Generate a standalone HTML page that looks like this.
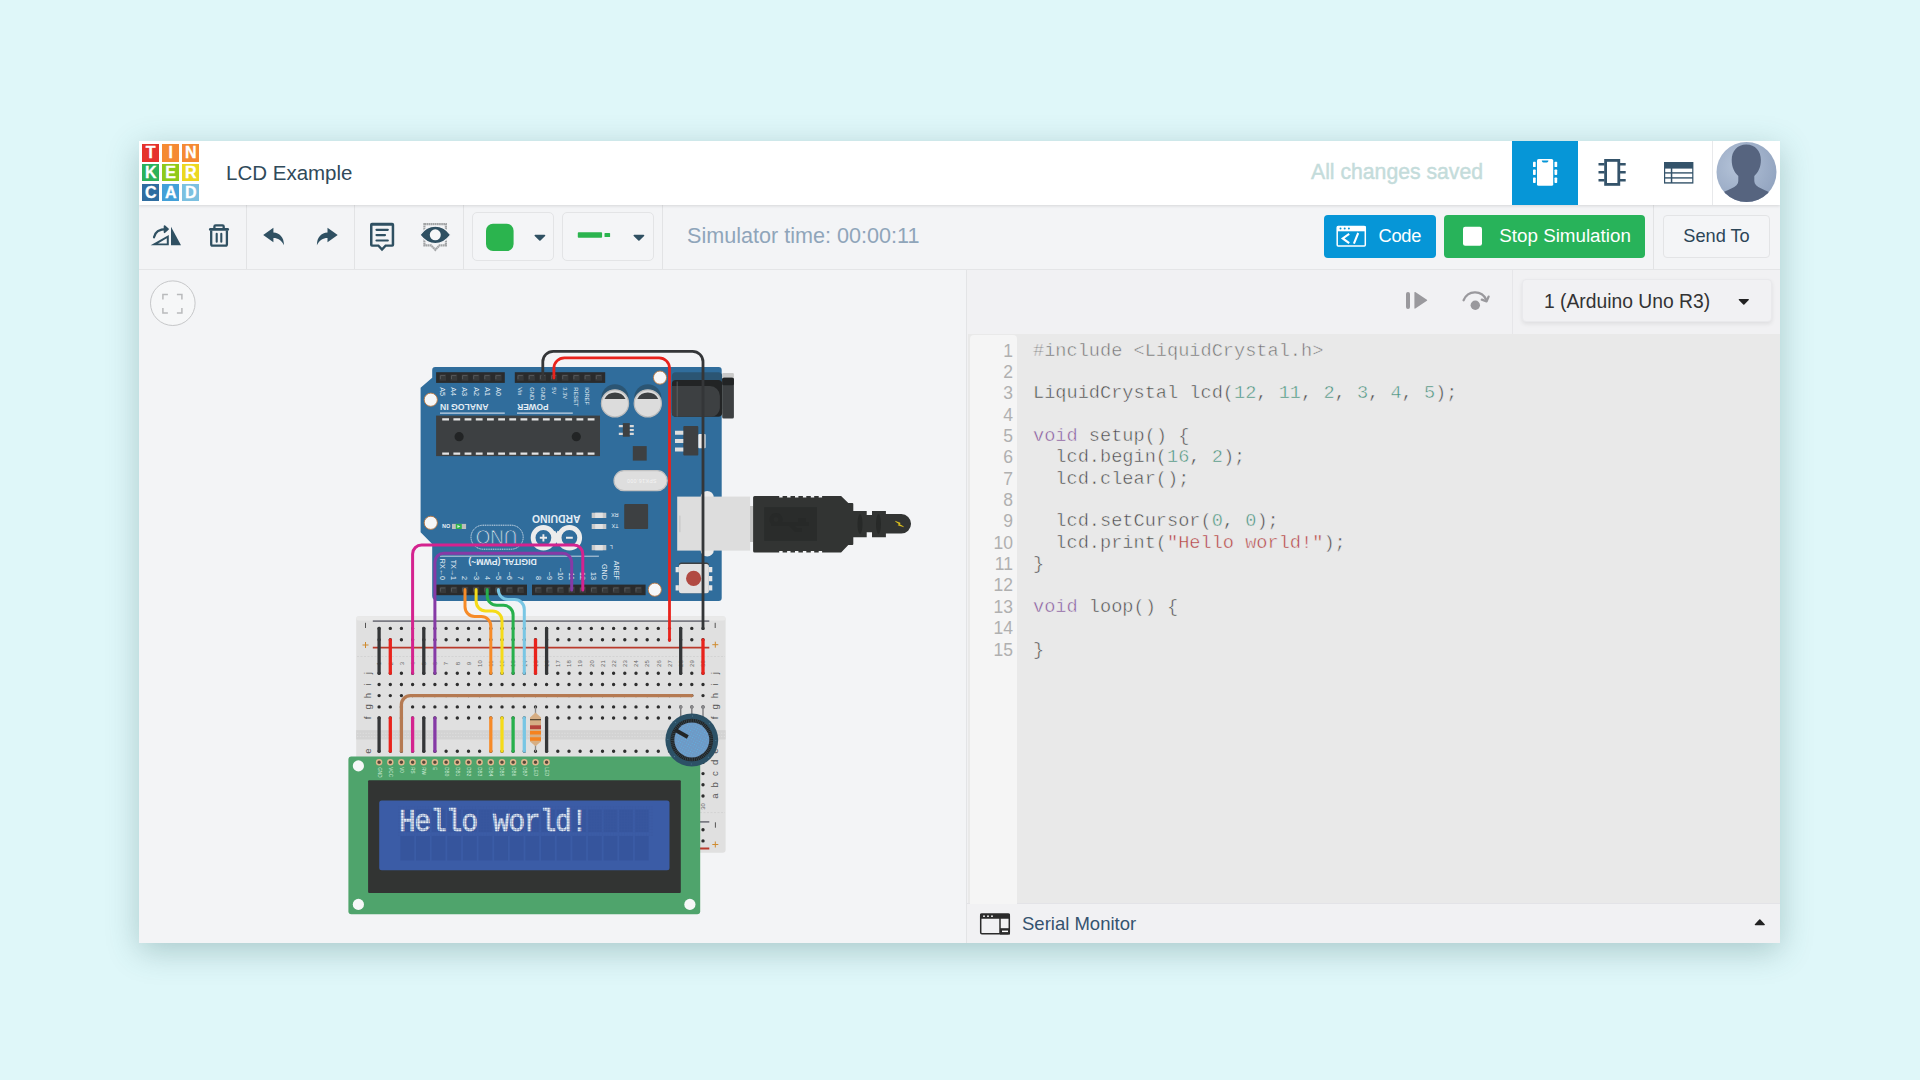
<!DOCTYPE html>
<html lang="en">
<head>
<meta charset="utf-8">
<title>LCD Example - Tinkercad</title>
<style>
*{box-sizing:border-box;margin:0;padding:0}
html,body{width:1920px;height:1080px;overflow:hidden}
body{background:#dff7f9;font-family:"Liberation Sans",sans-serif;position:relative}
.abs{position:absolute}
#win{position:absolute;left:139px;top:141px;width:1641px;height:802px;background:#f3f4f6;box-shadow:0 8px 30px rgba(45,95,95,.30);overflow:hidden}
#hdr{position:absolute;left:0;top:0;width:1641px;height:64px;background:#fff;box-shadow:0 1px 3px rgba(0,0,0,.12);z-index:3}
.tile{position:absolute;width:17.400px;height:17.400px;color:#fff;font-weight:bold;font-size:16px;line-height:17.800px;-webkit-text-stroke:.3px #fff;text-align:center}
#title{position:absolute;left:87px;top:19.700px;font-size:20.5px;color:#304a5a;line-height:24px;white-space:nowrap}
#saved{position:absolute;right:297px;top:19px;font-size:21.2px;color:#c4dcdb;-webkit-text-stroke:.45px #c4dcdb;line-height:24px;white-space:nowrap}
#tb{position:absolute;left:0;top:64px;width:1641px;height:65px;background:#f3f4f6;border-bottom:1px solid #e4e5e7;z-index:2}
.sep{position:absolute;top:0;width:1px;height:64px;background:#e2e3e5}
.box{position:absolute;top:7.400px;height:48.500px;border:1px solid #e3e4e6;border-radius:5px;background:#f4f5f7}
#simtime{position:absolute;left:548px;top:83.200px;font-size:21.6px;color:#8fa5ba;line-height:24px;white-space:nowrap;z-index:2}
.btn{position:absolute;top:74.200px;height:42.700px;border-radius:4px;color:#fff;font-size:17.5px;line-height:42px;white-space:nowrap;z-index:2}
#cp{position:absolute;left:827px;top:128px;width:814px;height:674px;background:#f1f1f3;border-left:1px solid #e3e4e6}
#gut{position:absolute;left:3px;top:66px;width:47px;height:569px;background:#f5f5f5;border-radius:4px 4px 0 0;z-index:1}
#code{position:absolute;left:1px;top:65px;width:813px;height:569px;background:#e9e9e9}
.ln{z-index:2;position:absolute;right:767px;width:40px;text-align:right;font-size:17.5px;color:#b0b0b0;line-height:21.36px;height:21.36px}
.cl{position:absolute;left:66px;font-family:"Liberation Mono",monospace;font-size:18.62px;line-height:21.36px;height:21.36px;color:#484848;white-space:pre;-webkit-text-stroke:.5px #e9e9e9}
.k{color:#84559a}.n{color:#46907a}.s{color:#b23c3c}.m{color:#737373}
#sertxt{position:absolute;left:55px;top:8px;font-size:18.5px;line-height:24px;color:#35536f;white-space:nowrap}
#dd{position:absolute;left:555px;top:10px;width:250px;height:43px;border-radius:4px;background:#f1f1f3;border:1px solid #e9e9ec;box-shadow:0 2px 4px rgba(0,0,0,.08)}
#dd span{position:absolute;left:21px;top:10px;font-size:19.300px;line-height:24px;color:#333;white-space:nowrap}
#ser{position:absolute;left:0;top:634px;width:814px;height:40px;background:#f1f1f3;border-top:1px solid #e3e3e7}
</style>
</head>
<body>
<div id="win">
  <div id="hdr">
    <div class="tile" style="left:3px;top:3.400px;background:#e5322b">T</div>
    <div class="tile" style="left:23px;top:3.400px;background:#f58a33">I</div>
    <div class="tile" style="left:43px;top:3.400px;background:#f58a33">N</div>
    <div class="tile" style="left:3px;top:22.900px;background:#2bb15a">K</div>
    <div class="tile" style="left:23px;top:22.900px;background:#8fc91a">E</div>
    <div class="tile" style="left:43px;top:22.900px;background:#ecd820">R</div>
    <div class="tile" style="left:3px;top:42.600px;background:#2f6da0">C</div>
    <div class="tile" style="left:23px;top:42.600px;background:#43a0d8">A</div>
    <div class="tile" style="left:43px;top:42.600px;background:#7cc0e0">D</div>
    <div id="title">LCD Example</div>
    <div class="abs" style="left:1373px;top:0;width:66px;height:64px;background:#0696d7"></div>
    <div class="abs" style="left:1573px;top:0;width:1px;height:64px;background:#e8e9eb"></div>
    <div id="saved">All changes saved</div>
  </div>
  <div id="tb">
    <div class="sep" style="left:107px"></div>
    <div class="sep" style="left:215px"></div>
    <div class="sep" style="left:324px"></div>
    <div class="sep" style="left:523px"></div>
    <div class="sep" style="left:1514px"></div>
    <div class="box" style="left:333px;width:82px"></div>
    <div class="box" style="left:423px;width:92px"></div>
  </div>
  <div id="simtime">Simulator time: 00:00:11</div>
  <div class="btn" id="bcode" style="left:1184.500px;width:112.500px;background:#0696d7;padding-left:55px;font-size:18.300px;letter-spacing:-.3px">Code</div>
  <div class="btn" id="bstop" style="left:1305px;width:201px;background:#28b35a;padding-left:55.300px;font-size:18.800px">Stop Simulation</div>
  <div class="btn" style="left:1524px;width:107px;background:#f4f5f7;border:1px solid #e3e4e6;color:#2c4557;text-align:center;line-height:40px;font-size:18.200px" id="bsend">Send To</div>
  <div id="cp">
    <div id="gut"></div>
    <div id="code"></div>
    <div class="ln" style="top:71.50px">1</div><div class="cl" style="top:71.50px"><span class="m">#include &lt;LiquidCrystal.h&gt;</span></div>
<div class="ln" style="top:92.86px">2</div><div class="cl" style="top:92.86px"></div>
<div class="ln" style="top:114.22px">3</div><div class="cl" style="top:114.22px">LiquidCrystal lcd(<span class="n">12</span>, <span class="n">11</span>, <span class="n">2</span>, <span class="n">3</span>, <span class="n">4</span>, <span class="n">5</span>);</div>
<div class="ln" style="top:135.58px">4</div><div class="cl" style="top:135.58px"></div>
<div class="ln" style="top:156.94px">5</div><div class="cl" style="top:156.94px"><span class="k">void</span> setup() {</div>
<div class="ln" style="top:178.30px">6</div><div class="cl" style="top:178.30px">  lcd.begin(<span class="n">16</span>, <span class="n">2</span>);</div>
<div class="ln" style="top:199.66px">7</div><div class="cl" style="top:199.66px">  lcd.clear();</div>
<div class="ln" style="top:221.02px">8</div><div class="cl" style="top:221.02px"></div>
<div class="ln" style="top:242.38px">9</div><div class="cl" style="top:242.38px">  lcd.setCursor(<span class="n">0</span>, <span class="n">0</span>);</div>
<div class="ln" style="top:263.74px">10</div><div class="cl" style="top:263.74px">  lcd.print(<span class="s">"Hello world!"</span>);</div>
<div class="ln" style="top:285.10px">11</div><div class="cl" style="top:285.10px">}</div>
<div class="ln" style="top:306.46px">12</div><div class="cl" style="top:306.46px"></div>
<div class="ln" style="top:327.82px">13</div><div class="cl" style="top:327.82px"><span class="k">void</span> loop() {</div>
<div class="ln" style="top:349.18px">14</div><div class="cl" style="top:349.18px"></div>
<div class="ln" style="top:370.54px">15</div><div class="cl" style="top:370.54px">}</div>
<div id="ser"><span id="sertxt">Serial Monitor</span></div>
    <div class="abs" style="left:545px;top:0;width:1px;height:65px;background:#e6e6e9"></div>
    <div id="dd"><span>1 (Arduino Uno R3)</span></div>
  </div>
</div>

<svg id="ov" class="abs" style="left:0;top:0;z-index:10" width="1920" height="1080" viewBox="0 0 1920 1080">
<g id="hdr-icons">
<g fill="#fff">
<rect x="1537" y="159" width="16.2" height="26.8" rx="1.6"/>
<rect x="1533" y="161.7" width="2.7" height="5.4" rx=".7"/><rect x="1533" y="169.6" width="2.7" height="5.4" rx=".7"/><rect x="1533" y="177.5" width="2.7" height="5.4" rx=".7"/>
<rect x="1554.5" y="161.7" width="2.7" height="5.4" rx=".7"/><rect x="1554.5" y="169.6" width="2.7" height="5.4" rx=".7"/><rect x="1554.5" y="177.5" width="2.7" height="5.4" rx=".7"/>
</g>
<path d="M1541.8 160.4h6.6a3.3 2.2 0 0 1-6.6 0z" fill="#0696d7"/>
<rect x="1605.6" y="160.4" width="13.2" height="24" fill="none" stroke="#34536a" stroke-width="2.8"/>
<path d="M1598.5 164.3h6M1598.5 172.3h6M1598.5 180.3h6M1620 164.3h5.7M1620 172.3h5.7M1620 180.3h5.7" stroke="#34536a" stroke-width="2.5" fill="none"/>
<rect x="1664" y="162" width="29.4" height="21.6" fill="#34536a"/>
<g fill="#fff"><rect x="1665.2" y="168.6" width="5.6" height="3.6"/><rect x="1672.3" y="168.6" width="19.9" height="3.6"/>
<rect x="1665.2" y="173.6" width="5.6" height="3.6"/><rect x="1672.3" y="173.6" width="19.9" height="3.6"/>
<rect x="1665.2" y="178.6" width="5.6" height="3.6"/><rect x="1672.3" y="178.6" width="19.9" height="3.6"/></g>
<clipPath id="avc"><circle cx="1746.5" cy="172" r="30"/></clipPath>
<radialGradient id="avg" cx=".35" cy=".4" r=".8"><stop offset="0" stop-color="#b4c3d8"/><stop offset="1" stop-color="#8d9fbc"/></radialGradient>
<circle cx="1746.5" cy="172" r="30" fill="url(#avg)"/>
<g clip-path="url(#avc)" fill="#56647f">
<path d="M1746.3 144.5c9 0 14.6 6.5 14.6 15.5c0 7-2.6 12.5-6.6 16v5c0 3 2.5 5.5 7 7.500c5 2.300 9.500 4 13 8v12h-56v-12c3.500-4 8-5.700 13-8c4.500-2 7-4.500 7-7.500v-5c-4-3.500-6.600-9-6.600-16c0-9 5.600-15.500 14.600-15.500z"/>
</g>
</g>
<g id="tb-icons" fill="#2f5062">
<path d="M171 226.800L181 245.300H171z"/>
<path fill-rule="evenodd" d="M150.600 245.300L168.800 235V245.300zM158 243.400H166.800V238.300z"/>
<path d="M154 237.300C155 232 159 229.300 166.500 229.200" fill="none" stroke="#2f5062" stroke-width="2.200" stroke-linecap="round"/>
<path d="M164.600 226.200L168 229.200L164.600 232.200z" fill="#2f5062" stroke="#2f5062" stroke-width="1.800" stroke-linecap="round" stroke-linejoin="round"/>
<g fill="none" stroke="#2f5062" stroke-width="2.300">
<path d="M214.400 228.500V226.600a1.200 1.200 0 0 1 1.200-1.200h6.900a1.200 1.200 0 0 1 1.200 1.200V228.500"/>
<path d="M210.300 229.400H227.700" stroke-width="2.700" stroke-linecap="round"/>
<path d="M211.200 230.500V244.300a1.400 1.400 0 0 0 1.400 1.400h12.900a1.400 1.400 0 0 0 1.400-1.400V230.500"/>
<path d="M216.700 233.800V241.800M221.300 233.800V241.800" stroke-width="2.100" stroke-linecap="round"/>
</g>
<path d="M263.200 235.100L273.400 227.800V232.400C279.500 232.600 284 237 284 245.200C281.500 240.500 278 238 273.400 238V242.300z"/>
<path d="M337.700 235.100L327.500 227.800V232.400C321.400 232.600 316.900 237 316.900 245.200C319.400 240.500 322.900 238 327.500 238V242.300z"/>
<path fill-rule="evenodd" d="M372 222.700h20.200a2 2 0 0 1 2 2v20a2 2 0 0 1-2 2h-6L382 251.200L377.800 246.700h-5.800a2 2 0 0 1-2-2v-20a2 2 0 0 1 2-2zM372.500 225.800v18.600h6.400L382 247.800L385.100 244.400h6.600v-18.600z"/>
<path d="M376.500 229.800H387.800M376.500 235.100H385M376.500 240.500H387.800" fill="none" stroke="#2f5062" stroke-width="2.200" stroke-linecap="round"/>
<path d="M424.400 224.100h21.500v21.300h-6.400L435.300 249.800L431 245.400h-6.600z" fill="none" stroke="#a2a4a6" stroke-width="2.200" stroke-dasharray="1.700 .4"/>
<path d="M420 234.800C424.800 228.400 430 226.200 435.300 226.200C440.600 226.200 445.800 228.400 450.600 234.800C445.800 241.200 440.600 243.500 435.300 243.500C430 243.500 424.800 241.200 420 234.800z" stroke="#f3f4f6" stroke-width="1.200"/>
<circle cx="435.300" cy="234.800" r="5.500" fill="#f6f7f8"/>
<rect x="486" y="223.700" width="27.600" height="27.400" rx="7" fill="#2bb44e"/>
<path d="M535.200 234.800h9.400a.7.700 0 0 1 .5 1.200l-4.600 4.500a.9.900 0 0 1-1.200 0l-4.600-4.500a.7.700 0 0 1 .5-1.200z"/>
<path d="M634.200 234.800h9.400a.7.700 0 0 1 .5 1.200l-4.600 4.500a.9.900 0 0 1-1.200 0l-4.600-4.500a.7.700 0 0 1 .5-1.200z"/>
<rect x="577.800" y="232.200" width="24.300" height="5.600" rx=".8" fill="#2bb44e"/>
<rect x="604.500" y="233.100" width="5.600" height="3.900" rx=".6" fill="#2bb44e"/>
</g>

<g id="btn-icons">
<rect x="1337.2" y="226.500" width="28.100" height="19.500" rx="1" fill="none" stroke="#fff" stroke-width="1.500"/>
<rect x="1337" y="226" width="28.500" height="5.300" fill="#fff"/>
<circle cx="1340.500" cy="228.400" r="1" fill="#0696d7"/><circle cx="1344.700" cy="228.400" r="1" fill="#0696d7"/><circle cx="1348.900" cy="228.400" r="1" fill="#0696d7"/>
<path d="M1349.200 233.800L1342.700 238.400L1349.200 243.200M1358.200 233L1353.900 243.700" fill="none" stroke="#fff" stroke-width="2.100"/>
<rect x="1463" y="226.800" width="19" height="19" rx="2.200" fill="#fff"/>
<g fill="#9a999d" stroke="none">
<rect x="1406" y="292" width="4" height="17" rx="2"/>
<path d="M1414.400 292.600a.6.600 0 0 1 .9-.5l11.600 7.700a.6.600 0 0 1 0 1l-11.600 7.700a.6.600 0 0 1-.9-.5z"/>
<circle cx="1475.300" cy="305.300" r="4.700"/>
</g>
<path d="M1463.600 300.200C1468 290.200 1481.500 289.600 1486.300 299.800" fill="none" stroke="#9a999d" stroke-width="2.300" stroke-linecap="round"/>
<path d="M1481.800 299.600L1486.600 301.300L1488.600 296.600" fill="none" stroke="#9a999d" stroke-width="2.300" stroke-linecap="round" stroke-linejoin="round"/>
<path d="M1739.300 298.900h9a.6.600 0 0 1 .45 1l-4.400 4.700a.8.800 0 0 1-1.100 0l-4.400-4.700a.6.600 0 0 1 .45-1z" fill="#222"/>
<path d="M1755.300 925.200h9a.6.600 0 0 0 .45-1l-4.400-4.700a.8.800 0 0 0-1.100 0l-4.400 4.700a.6.600 0 0 0 .45 1z" fill="#222"/>
<rect x="980.700" y="914.200" width="28.600" height="19.600" rx="1.200" fill="none" stroke="#2b2b2b" stroke-width="1.500"/>
<rect x="980" y="913.500" width="30" height="5.200" rx="1" fill="#2b2b2b"/>
<circle cx="984" cy="916.200" r=".9" fill="#fff"/><circle cx="988" cy="916.200" r=".9" fill="#fff"/><circle cx="992" cy="916.200" r=".9" fill="#fff"/>
<path d="M1000 918V934" stroke="#2b2b2b" stroke-width="1.500"/>
<rect x="1000" y="928.200" width="10" height="6.300" fill="#2b2b2b"/>
<rect x="1002" y="930.600" width="6" height="1.500" fill="#fff"/>
</g>
<g id="fit">
<circle cx="172.800" cy="303.200" r="22.300" fill="#f6f7f8" stroke="#c6c7c9" stroke-width="1"/>
<path d="M162.900 299.400V294.400h5M176.900 294.400h5v5M181.900 308v5h-5M167.900 313h-5v-5" fill="none" stroke="#b9babc" stroke-width="1.500"/>
</g>
<!--CIRCUIT-->
<g id="breadboard">
<rect x="356.2" y="616.2" width="369.4" height="236.6" rx="3" fill="#e0e0e0"/>
<rect x="356.2" y="616.2" width="369.4" height="4.2" rx="2" fill="#e9e9e9"/>
<rect x="356.2" y="730.2" width="369.4" height="9.2" fill="#d3d3d3"/>
<path d="M357 733.300H725M357 736.600H725" stroke="#dedede" stroke-width="1" stroke-dasharray="1.400 1.400" fill="none"/>
<path d="M357 656.500H725M357 812.600H725" stroke="#cfcfcf" stroke-width=".8" stroke-dasharray="2 1.500" fill="none"/>
<path d="M372.800 621.200H709.300M372.800 821.900H709.300" stroke="#7a7a82" stroke-width="1.800" fill="none"/>
<path d="M372.800 647.700H709.300M372.800 848.500H709.300" stroke="#b93a2c" stroke-width="1.800" fill="none"/>
<path d="M379.1 628.4h.01M390.3 628.4h.01M401.4 628.4h.01M412.6 628.4h.01M423.8 628.4h.01M434.9 628.4h.01M446.1 628.4h.01M457.3 628.4h.01M468.5 628.4h.01M479.6 628.4h.01M490.8 628.4h.01M502.0 628.4h.01M513.1 628.4h.01M524.3 628.4h.01M535.5 628.4h.01M546.6 628.4h.01M557.8 628.4h.01M569.0 628.4h.01M580.1 628.4h.01M591.3 628.4h.01M602.5 628.4h.01M613.6 628.4h.01M624.8 628.4h.01M636.0 628.4h.01M647.2 628.4h.01M658.3 628.4h.01M669.5 628.4h.01M680.7 628.4h.01M691.8 628.4h.01M703.0 628.4h.01M379.1 639.8h.01M390.3 639.8h.01M401.4 639.8h.01M412.6 639.8h.01M423.8 639.8h.01M434.9 639.8h.01M446.1 639.8h.01M457.3 639.8h.01M468.5 639.8h.01M479.6 639.8h.01M490.8 639.8h.01M502.0 639.8h.01M513.1 639.8h.01M524.3 639.8h.01M535.5 639.8h.01M546.6 639.8h.01M557.8 639.8h.01M569.0 639.8h.01M580.1 639.8h.01M591.3 639.8h.01M602.5 639.8h.01M613.6 639.8h.01M624.8 639.8h.01M636.0 639.8h.01M647.2 639.8h.01M658.3 639.8h.01M669.5 639.8h.01M680.7 639.8h.01M691.8 639.8h.01M703.0 639.8h.01M379.1 673.3h.01M390.3 673.3h.01M401.4 673.3h.01M412.6 673.3h.01M423.8 673.3h.01M434.9 673.3h.01M446.1 673.3h.01M457.3 673.3h.01M468.5 673.3h.01M479.6 673.3h.01M490.8 673.3h.01M502.0 673.3h.01M513.1 673.3h.01M524.3 673.3h.01M535.5 673.3h.01M546.6 673.3h.01M557.8 673.3h.01M569.0 673.3h.01M580.1 673.3h.01M591.3 673.3h.01M602.5 673.3h.01M613.6 673.3h.01M624.8 673.3h.01M636.0 673.3h.01M647.2 673.3h.01M658.3 673.3h.01M669.5 673.3h.01M680.7 673.3h.01M691.8 673.3h.01M703.0 673.3h.01M379.1 684.5h.01M390.3 684.5h.01M401.4 684.5h.01M412.6 684.5h.01M423.8 684.5h.01M434.9 684.5h.01M446.1 684.5h.01M457.3 684.5h.01M468.5 684.5h.01M479.6 684.5h.01M490.8 684.5h.01M502.0 684.5h.01M513.1 684.5h.01M524.3 684.5h.01M535.5 684.5h.01M546.6 684.5h.01M557.8 684.5h.01M569.0 684.5h.01M580.1 684.5h.01M591.3 684.5h.01M602.5 684.5h.01M613.6 684.5h.01M624.8 684.5h.01M636.0 684.5h.01M647.2 684.5h.01M658.3 684.5h.01M669.5 684.5h.01M680.7 684.5h.01M691.8 684.5h.01M703.0 684.5h.01M379.1 695.6h.01M390.3 695.6h.01M401.4 695.6h.01M412.6 695.6h.01M423.8 695.6h.01M434.9 695.6h.01M446.1 695.6h.01M457.3 695.6h.01M468.5 695.6h.01M479.6 695.6h.01M490.8 695.6h.01M502.0 695.6h.01M513.1 695.6h.01M524.3 695.6h.01M535.5 695.6h.01M546.6 695.6h.01M557.8 695.6h.01M569.0 695.6h.01M580.1 695.6h.01M591.3 695.6h.01M602.5 695.6h.01M613.6 695.6h.01M624.8 695.6h.01M636.0 695.6h.01M647.2 695.6h.01M658.3 695.6h.01M669.5 695.6h.01M680.7 695.6h.01M691.8 695.6h.01M703.0 695.6h.01M379.1 706.9h.01M390.3 706.9h.01M401.4 706.9h.01M412.6 706.9h.01M423.8 706.9h.01M434.9 706.9h.01M446.1 706.9h.01M457.3 706.9h.01M468.5 706.9h.01M479.6 706.9h.01M490.8 706.9h.01M502.0 706.9h.01M513.1 706.9h.01M524.3 706.9h.01M535.5 706.9h.01M546.6 706.9h.01M557.8 706.9h.01M569.0 706.9h.01M580.1 706.9h.01M591.3 706.9h.01M602.5 706.9h.01M613.6 706.9h.01M624.8 706.9h.01M636.0 706.9h.01M647.2 706.9h.01M658.3 706.9h.01M669.5 706.9h.01M680.7 706.9h.01M691.8 706.9h.01M703.0 706.9h.01M379.1 718.0h.01M390.3 718.0h.01M401.4 718.0h.01M412.6 718.0h.01M423.8 718.0h.01M434.9 718.0h.01M446.1 718.0h.01M457.3 718.0h.01M468.5 718.0h.01M479.6 718.0h.01M490.8 718.0h.01M502.0 718.0h.01M513.1 718.0h.01M524.3 718.0h.01M535.5 718.0h.01M546.6 718.0h.01M557.8 718.0h.01M569.0 718.0h.01M580.1 718.0h.01M591.3 718.0h.01M602.5 718.0h.01M613.6 718.0h.01M624.8 718.0h.01M636.0 718.0h.01M647.2 718.0h.01M658.3 718.0h.01M669.5 718.0h.01M680.7 718.0h.01M691.8 718.0h.01M703.0 718.0h.01M379.1 751.2h.01M390.3 751.2h.01M401.4 751.2h.01M412.6 751.2h.01M423.8 751.2h.01M434.9 751.2h.01M446.1 751.2h.01M457.3 751.2h.01M468.5 751.2h.01M479.6 751.2h.01M490.8 751.2h.01M502.0 751.2h.01M513.1 751.2h.01M524.3 751.2h.01M535.5 751.2h.01M546.6 751.2h.01M557.8 751.2h.01M569.0 751.2h.01M580.1 751.2h.01M591.3 751.2h.01M602.5 751.2h.01M613.6 751.2h.01M624.8 751.2h.01M636.0 751.2h.01M647.2 751.2h.01M658.3 751.2h.01M669.5 751.2h.01M680.7 751.2h.01M691.8 751.2h.01M703.0 751.2h.01M379.1 762.4h.01M390.3 762.4h.01M401.4 762.4h.01M412.6 762.4h.01M423.8 762.4h.01M434.9 762.4h.01M446.1 762.4h.01M457.3 762.4h.01M468.5 762.4h.01M479.6 762.4h.01M490.8 762.4h.01M502.0 762.4h.01M513.1 762.4h.01M524.3 762.4h.01M535.5 762.4h.01M546.6 762.4h.01M557.8 762.4h.01M569.0 762.4h.01M580.1 762.4h.01M591.3 762.4h.01M602.5 762.4h.01M613.6 762.4h.01M624.8 762.4h.01M636.0 762.4h.01M647.2 762.4h.01M658.3 762.4h.01M669.5 762.4h.01M680.7 762.4h.01M691.8 762.4h.01M703.0 762.4h.01M379.1 773.6h.01M390.3 773.6h.01M401.4 773.6h.01M412.6 773.6h.01M423.8 773.6h.01M434.9 773.6h.01M446.1 773.6h.01M457.3 773.6h.01M468.5 773.6h.01M479.6 773.6h.01M490.8 773.6h.01M502.0 773.6h.01M513.1 773.6h.01M524.3 773.6h.01M535.5 773.6h.01M546.6 773.6h.01M557.8 773.6h.01M569.0 773.6h.01M580.1 773.6h.01M591.3 773.6h.01M602.5 773.6h.01M613.6 773.6h.01M624.8 773.6h.01M636.0 773.6h.01M647.2 773.6h.01M658.3 773.6h.01M669.5 773.6h.01M680.7 773.6h.01M691.8 773.6h.01M703.0 773.6h.01M379.1 784.8h.01M390.3 784.8h.01M401.4 784.8h.01M412.6 784.8h.01M423.8 784.8h.01M434.9 784.8h.01M446.1 784.8h.01M457.3 784.8h.01M468.5 784.8h.01M479.6 784.8h.01M490.8 784.8h.01M502.0 784.8h.01M513.1 784.8h.01M524.3 784.8h.01M535.5 784.8h.01M546.6 784.8h.01M557.8 784.8h.01M569.0 784.8h.01M580.1 784.8h.01M591.3 784.8h.01M602.5 784.8h.01M613.6 784.8h.01M624.8 784.8h.01M636.0 784.8h.01M647.2 784.8h.01M658.3 784.8h.01M669.5 784.8h.01M680.7 784.8h.01M691.8 784.8h.01M703.0 784.8h.01M379.1 796.0h.01M390.3 796.0h.01M401.4 796.0h.01M412.6 796.0h.01M423.8 796.0h.01M434.9 796.0h.01M446.1 796.0h.01M457.3 796.0h.01M468.5 796.0h.01M479.6 796.0h.01M490.8 796.0h.01M502.0 796.0h.01M513.1 796.0h.01M524.3 796.0h.01M535.5 796.0h.01M546.6 796.0h.01M557.8 796.0h.01M569.0 796.0h.01M580.1 796.0h.01M591.3 796.0h.01M602.5 796.0h.01M613.6 796.0h.01M624.8 796.0h.01M636.0 796.0h.01M647.2 796.0h.01M658.3 796.0h.01M669.5 796.0h.01M680.7 796.0h.01M691.8 796.0h.01M703.0 796.0h.01M379.1 829.8h.01M390.3 829.8h.01M401.4 829.8h.01M412.6 829.8h.01M423.8 829.8h.01M434.9 829.8h.01M446.1 829.8h.01M457.3 829.8h.01M468.5 829.8h.01M479.6 829.8h.01M490.8 829.8h.01M502.0 829.8h.01M513.1 829.8h.01M524.3 829.8h.01M535.5 829.8h.01M546.6 829.8h.01M557.8 829.8h.01M569.0 829.8h.01M580.1 829.8h.01M591.3 829.8h.01M602.5 829.8h.01M613.6 829.8h.01M624.8 829.8h.01M636.0 829.8h.01M647.2 829.8h.01M658.3 829.8h.01M669.5 829.8h.01M680.7 829.8h.01M691.8 829.8h.01M703.0 829.8h.01M379.1 840.9h.01M390.3 840.9h.01M401.4 840.9h.01M412.6 840.9h.01M423.8 840.9h.01M434.9 840.9h.01M446.1 840.9h.01M457.3 840.9h.01M468.5 840.9h.01M479.6 840.9h.01M490.8 840.9h.01M502.0 840.9h.01M513.1 840.9h.01M524.3 840.9h.01M535.5 840.9h.01M546.6 840.9h.01M557.8 840.9h.01M569.0 840.9h.01M580.1 840.9h.01M591.3 840.9h.01M602.5 840.9h.01M613.6 840.9h.01M624.8 840.9h.01M636.0 840.9h.01M647.2 840.9h.01M658.3 840.9h.01M669.5 840.9h.01M680.7 840.9h.01M691.8 840.9h.01M703.0 840.9h.01" stroke="#2e2e2e" stroke-width="3.400" stroke-linecap="round" fill="none"/>
<path d="M365.500 622.800V628M715.200 622.800V628M365.500 823V828M715.400 822.300V827.700" stroke="#555" stroke-width="1" fill="none"/>
<path d="M362.500 645H368.500M365.500 642V648M712.300 644.700H718.300M715.300 641.700V647.700M712.300 844.500H718.300M715.300 841.500V847.500M362.500 845H368.500M365.500 842V848" stroke="#cf8a2e" stroke-width="1" fill="none"/>
<g font-family="Liberation Sans,sans-serif" font-size="6" fill="#666" text-anchor="middle">
<text transform="translate(381.3 663.600) rotate(-90)">1</text>
<text transform="translate(381.3 806.400) rotate(-90)">1</text>
<text transform="translate(392.5 663.600) rotate(-90)">2</text>
<text transform="translate(392.5 806.400) rotate(-90)">2</text>
<text transform="translate(403.6 663.600) rotate(-90)">3</text>
<text transform="translate(403.6 806.400) rotate(-90)">3</text>
<text transform="translate(414.8 663.600) rotate(-90)">4</text>
<text transform="translate(414.8 806.400) rotate(-90)">4</text>
<text transform="translate(426.0 663.600) rotate(-90)">5</text>
<text transform="translate(426.0 806.400) rotate(-90)">5</text>
<text transform="translate(437.1 663.600) rotate(-90)">6</text>
<text transform="translate(437.1 806.400) rotate(-90)">6</text>
<text transform="translate(448.3 663.600) rotate(-90)">7</text>
<text transform="translate(448.3 806.400) rotate(-90)">7</text>
<text transform="translate(459.5 663.600) rotate(-90)">8</text>
<text transform="translate(459.5 806.400) rotate(-90)">8</text>
<text transform="translate(470.7 663.600) rotate(-90)">9</text>
<text transform="translate(470.7 806.400) rotate(-90)">9</text>
<text transform="translate(481.8 663.600) rotate(-90)">10</text>
<text transform="translate(481.8 806.400) rotate(-90)">10</text>
<text transform="translate(493.0 663.600) rotate(-90)">11</text>
<text transform="translate(493.0 806.400) rotate(-90)">11</text>
<text transform="translate(504.2 663.600) rotate(-90)">12</text>
<text transform="translate(504.2 806.400) rotate(-90)">12</text>
<text transform="translate(515.3 663.600) rotate(-90)">13</text>
<text transform="translate(515.3 806.400) rotate(-90)">13</text>
<text transform="translate(526.5 663.600) rotate(-90)">14</text>
<text transform="translate(526.5 806.400) rotate(-90)">14</text>
<text transform="translate(537.7 663.600) rotate(-90)">15</text>
<text transform="translate(537.7 806.400) rotate(-90)">15</text>
<text transform="translate(548.8 663.600) rotate(-90)">16</text>
<text transform="translate(548.8 806.400) rotate(-90)">16</text>
<text transform="translate(560.0 663.600) rotate(-90)">17</text>
<text transform="translate(560.0 806.400) rotate(-90)">17</text>
<text transform="translate(571.2 663.600) rotate(-90)">18</text>
<text transform="translate(571.2 806.400) rotate(-90)">18</text>
<text transform="translate(582.3 663.600) rotate(-90)">19</text>
<text transform="translate(582.3 806.400) rotate(-90)">19</text>
<text transform="translate(593.5 663.600) rotate(-90)">20</text>
<text transform="translate(593.5 806.400) rotate(-90)">20</text>
<text transform="translate(604.7 663.600) rotate(-90)">21</text>
<text transform="translate(604.7 806.400) rotate(-90)">21</text>
<text transform="translate(615.8 663.600) rotate(-90)">22</text>
<text transform="translate(615.8 806.400) rotate(-90)">22</text>
<text transform="translate(627.0 663.600) rotate(-90)">23</text>
<text transform="translate(627.0 806.400) rotate(-90)">23</text>
<text transform="translate(638.2 663.600) rotate(-90)">24</text>
<text transform="translate(638.2 806.400) rotate(-90)">24</text>
<text transform="translate(649.4 663.600) rotate(-90)">25</text>
<text transform="translate(649.4 806.400) rotate(-90)">25</text>
<text transform="translate(660.5 663.600) rotate(-90)">26</text>
<text transform="translate(660.5 806.400) rotate(-90)">26</text>
<text transform="translate(671.7 663.600) rotate(-90)">27</text>
<text transform="translate(671.7 806.400) rotate(-90)">27</text>
<text transform="translate(682.9 663.600) rotate(-90)">28</text>
<text transform="translate(682.9 806.400) rotate(-90)">28</text>
<text transform="translate(694.0 663.600) rotate(-90)">29</text>
<text transform="translate(694.0 806.400) rotate(-90)">29</text>
<text transform="translate(705.2 663.600) rotate(-90)">30</text>
<text transform="translate(705.2 806.400) rotate(-90)">30</text>
</g>
<g font-family="Liberation Sans,sans-serif" font-size="9.500" fill="#555" text-anchor="middle">
<text transform="translate(370.500 673.3) rotate(-90)">j</text>
<text transform="translate(718.300 673.3) rotate(-90)">j</text>
<text transform="translate(370.500 684.5) rotate(-90)">i</text>
<text transform="translate(718.300 684.5) rotate(-90)">i</text>
<text transform="translate(370.500 695.6) rotate(-90)">h</text>
<text transform="translate(718.300 695.6) rotate(-90)">h</text>
<text transform="translate(370.500 706.9) rotate(-90)">g</text>
<text transform="translate(718.300 706.9) rotate(-90)">g</text>
<text transform="translate(370.500 718.0) rotate(-90)">f</text>
<text transform="translate(718.300 718.0) rotate(-90)">f</text>
<text transform="translate(370.500 751.2) rotate(-90)">e</text>
<text transform="translate(718.300 751.2) rotate(-90)">e</text>
<text transform="translate(370.500 762.4) rotate(-90)">d</text>
<text transform="translate(718.300 762.4) rotate(-90)">d</text>
<text transform="translate(370.500 773.6) rotate(-90)">c</text>
<text transform="translate(718.300 773.6) rotate(-90)">c</text>
<text transform="translate(370.500 784.8) rotate(-90)">b</text>
<text transform="translate(718.300 784.8) rotate(-90)">b</text>
<text transform="translate(370.500 796.0) rotate(-90)">a</text>
<text transform="translate(718.300 796.0) rotate(-90)">a</text>
</g>
</g>
<g id="arduino">
<path d="M435.200 366.900H718.700a3 3 0 0 1 3 3V597.900a3 3 0 0 1-3 3H437.200a5 5 0 0 1-5-5V543.900L420.600 532.200V387.800L432.200 377.800V369.900a3 3 0 0 1 3-3z" fill="#306d9c"/>
<circle cx="430.8" cy="399.7" r="6.600" fill="#f6f7f8" stroke="#b9763f" stroke-width=".9"/>
<circle cx="430.8" cy="522.8" r="6.600" fill="#f6f7f8" stroke="#b9763f" stroke-width=".9"/>
<circle cx="660" cy="377.6" r="6.600" fill="#f6f7f8" stroke="#b9763f" stroke-width=".9"/>
<circle cx="654.8" cy="589.7" r="6.600" fill="#f6f7f8" stroke="#b9763f" stroke-width=".9"/>
<rect x="436.1" y="372.2" width="68.7" height="10.7" fill="#2a2b2c"/>
<path d="M439.5 374.4h6.600v6.300h-6.600zM450.6 374.4h6.600v6.300h-6.600zM461.7 374.4h6.600v6.300h-6.600zM472.8 374.4h6.600v6.300h-6.600zM483.9 374.4h6.600v6.300h-6.600zM495.0 374.4h6.600v6.300h-6.600z" fill="#37393a"/>
<path d="M440.4 379.2v-3.600h4.800M451.5 379.2v-3.600h4.800M462.6 379.2v-3.600h4.800M473.7 379.2v-3.600h4.800M484.8 379.2v-3.600h4.800M495.9 379.2v-3.600h4.800" stroke="#55585a" stroke-width="1" fill="none"/>
<rect x="514.8" y="372.2" width="90.4" height="10.7" fill="#2a2b2c"/>
<path d="M517.1 374.4h6.600v6.300h-6.600zM528.3 374.4h6.600v6.300h-6.600zM539.5 374.4h6.600v6.300h-6.600zM550.6 374.4h6.600v6.300h-6.600zM561.8 374.4h6.600v6.300h-6.600zM573.0 374.4h6.600v6.300h-6.600zM584.2 374.4h6.600v6.300h-6.600zM595.4 374.4h6.600v6.300h-6.600z" fill="#37393a"/>
<path d="M518.0 379.2v-3.600h4.800M529.2 379.2v-3.600h4.800M540.4 379.2v-3.600h4.800M551.5 379.2v-3.600h4.800M562.7 379.2v-3.600h4.800M573.9 379.2v-3.600h4.800M585.1 379.2v-3.600h4.800M596.3 379.2v-3.600h4.800" stroke="#55585a" stroke-width="1" fill="none"/>
<rect x="436.1" y="584.6" width="90.9" height="10.6" fill="#2a2b2c"/>
<path d="M439.5 586.8h6.600v6.300h-6.600zM450.6 586.8h6.600v6.300h-6.600zM461.7 586.8h6.600v6.300h-6.600zM472.8 586.8h6.600v6.300h-6.600zM483.9 586.8h6.600v6.300h-6.600zM495.1 586.8h6.600v6.300h-6.600zM506.2 586.8h6.600v6.300h-6.600zM517.3 586.8h6.600v6.300h-6.600z" fill="#37393a"/>
<path d="M440.4 591.6v-3.600h4.800M451.5 591.6v-3.600h4.800M462.6 591.6v-3.600h4.800M473.7 591.6v-3.600h4.800M484.8 591.6v-3.600h4.800M496.0 591.6v-3.600h4.800M507.1 591.6v-3.600h4.800M518.2 591.6v-3.600h4.800" stroke="#55585a" stroke-width="1" fill="none"/>
<rect x="532.0" y="584.6" width="113.6" height="10.6" fill="#2a2b2c"/>
<path d="M535.0 586.8h6.600v6.300h-6.600zM546.1 586.8h6.600v6.300h-6.600zM557.2 586.8h6.600v6.300h-6.600zM568.4 586.8h6.600v6.300h-6.600zM579.5 586.8h6.600v6.300h-6.600zM590.6 586.8h6.600v6.300h-6.600zM601.7 586.8h6.600v6.300h-6.600zM612.8 586.8h6.600v6.300h-6.600zM624.0 586.8h6.600v6.300h-6.600zM635.1 586.8h6.600v6.300h-6.600z" fill="#37393a"/>
<path d="M535.9 591.6v-3.600h4.800M547.0 591.6v-3.600h4.800M558.1 591.6v-3.600h4.800M569.3 591.6v-3.600h4.800M580.4 591.6v-3.600h4.800M591.5 591.6v-3.600h4.800M602.6 591.6v-3.600h4.800M613.7 591.6v-3.600h4.800M624.9 591.6v-3.600h4.800M636.0 591.6v-3.600h4.800" stroke="#55585a" stroke-width="1" fill="none"/>
<g font-family="Liberation Sans,sans-serif" font-size="7.200" fill="#e4edf5">
<text transform="translate(440.2 387.300) rotate(90)">A5</text>
<text transform="translate(451.3 387.300) rotate(90)">A4</text>
<text transform="translate(462.4 387.300) rotate(90)">A3</text>
<text transform="translate(473.5 387.300) rotate(90)">A2</text>
<text transform="translate(484.6 387.300) rotate(90)">A1</text>
<text transform="translate(495.7 387.300) rotate(90)">A0</text>
</g>
<g font-family="Liberation Sans,sans-serif" font-size="5.800" fill="#e4edf5">
<text transform="translate(518.3 387.300) rotate(90)">Vin</text>
<text transform="translate(529.5 387.300) rotate(90)">GND</text>
<text transform="translate(540.7 387.300) rotate(90)">GND</text>
<text transform="translate(551.8 387.300) rotate(90)">5V</text>
<text transform="translate(563.0 387.300) rotate(90)">3.3V</text>
<text transform="translate(574.2 387.300) rotate(90)">RESET</text>
<text transform="translate(585.4 387.300) rotate(90)">IOREF</text>
</g>
<g font-family="Liberation Sans,sans-serif" font-size="7.200" fill="#e4edf5" text-anchor="end">
<text transform="translate(440.2 580) rotate(90)">RX←0</text>
<text transform="translate(451.3 580) rotate(90)">TX→1</text>
<text transform="translate(462.4 580) rotate(90)">2</text>
<text transform="translate(473.5 580) rotate(90)">~3</text>
<text transform="translate(484.6 580) rotate(90)">4</text>
<text transform="translate(495.8 580) rotate(90)">~5</text>
<text transform="translate(506.9 580) rotate(90)">~6</text>
<text transform="translate(518.0 580) rotate(90)">7</text>
<text transform="translate(535.7 580) rotate(90)">8</text>
<text transform="translate(546.8 580) rotate(90)">~9</text>
<text transform="translate(557.9 580) rotate(90)">~10</text>
<text transform="translate(569.1 580) rotate(90)">~11</text>
<text transform="translate(580.2 580) rotate(90)">12</text>
<text transform="translate(591.3 580) rotate(90)">13</text>
<text transform="translate(602.4 580) rotate(90)">GND</text>
<text transform="translate(613.5 580) rotate(90)">AREF</text>
</g>
<g font-family="Liberation Sans,sans-serif" font-weight="bold" fill="#e4edf5">
<text font-size="8.300" transform="translate(488.500 403.800) rotate(180)" textLength="48.500" lengthAdjust="spacingAndGlyphs">ANALOG IN</text>
<text font-size="8.300" transform="translate(548.500 403.800) rotate(180)">POWER</text>
<text font-size="8.700" transform="translate(536.800 559.300) rotate(180)">DIGITAL (PWM~)</text>
<text font-size="10.300" letter-spacing=".1" transform="translate(580.600 514.900) rotate(180)">ARDUINO</text>
<text font-size="5.400" transform="translate(450.200 524.300) rotate(180)">ON</text>
<text font-size="5.400" font-weight="normal" transform="translate(618.600 512.800) rotate(180)">RX</text>
<text font-size="5.400" font-weight="normal" transform="translate(618.600 523.900) rotate(180)">TX</text>
<text font-size="5.400" font-weight="normal" transform="translate(612.800 545.100) rotate(180)">L</text>
</g>
<path d="M440 413.200H504.800M517 413.200H572.800" stroke="#c3d3e3" stroke-width="1.200" fill="none"/>
<path d="M440 556.200H598.900" stroke="#c3d3e3" stroke-width="1" fill="none"/>
<rect x="436.100" y="415.600" width="163.900" height="40.500" fill="#3d4042"/>
<path d="M442.2 418.200h6.800v2.400h-6.800zM442.2 452.400h6.800v2.400h-6.800zM453.4 418.200h6.800v2.400h-6.800zM453.4 452.400h6.800v2.400h-6.800zM464.6 418.200h6.800v2.400h-6.800zM464.6 452.400h6.800v2.400h-6.800zM475.8 418.200h6.800v2.400h-6.800zM475.8 452.400h6.800v2.400h-6.800zM487.0 418.200h6.800v2.400h-6.800zM487.0 452.400h6.800v2.400h-6.800zM498.2 418.200h6.800v2.400h-6.800zM498.2 452.400h6.800v2.400h-6.800zM509.3 418.200h6.800v2.400h-6.800zM509.3 452.400h6.800v2.400h-6.800zM520.5 418.200h6.800v2.400h-6.800zM520.5 452.400h6.800v2.400h-6.800zM531.7 418.200h6.800v2.400h-6.800zM531.7 452.400h6.800v2.400h-6.800zM542.9 418.200h6.800v2.400h-6.800zM542.9 452.400h6.800v2.400h-6.800zM554.1 418.200h6.800v2.400h-6.800zM554.1 452.400h6.800v2.400h-6.800zM565.3 418.200h6.800v2.400h-6.800zM565.3 452.400h6.800v2.400h-6.800zM576.5 418.200h6.800v2.400h-6.800zM576.5 452.400h6.800v2.400h-6.800zM587.7 418.200h6.800v2.400h-6.800zM587.7 452.400h6.800v2.400h-6.800z" fill="#e3e3e3"/>
<circle cx="459.100" cy="436.700" r="4.600" fill="#222425"/><circle cx="576.300" cy="436.700" r="4.600" fill="#222425"/>
<circle cx="615.0" cy="397.800" r="13.600" fill="#2b5573"/>
<circle cx="615.0" cy="403.400" r="13.600" fill="#dcdcdc" stroke="#bcbcbc" stroke-width="1.200"/>
<path d="M604.5 398.900A11.900 11.900 0 0 1 625.5 398.900z" fill="#3d4042"/>
<circle cx="647.8" cy="397.800" r="13.600" fill="#2b5573"/>
<circle cx="647.8" cy="403.400" r="13.600" fill="#dcdcdc" stroke="#bcbcbc" stroke-width="1.200"/>
<path d="M637.3 398.900A11.900 11.900 0 0 1 658.3 398.900z" fill="#3d4042"/>
<rect x="622.800" y="423.100" width="7" height="13.600" fill="#3d4042"/>
<path d="M618.800 425h4v2.200h-4zM618.800 432.700h4v2.200h-4zM629.800 425h4v2.200h-4zM629.800 428.900h4v2.200h-4zM629.800 432.700h4v2.200h-4z" fill="#d8d8d8"/>
<rect x="632.800" y="446.100" width="13.900" height="14.500" fill="#3d4042"/>
<rect x="624.200" y="504.100" width="23.900" height="24.800" rx="1" fill="#3d4042"/>
<rect x="614" y="470.700" width="53.200" height="20" rx="10" fill="#dedede" stroke="#c2c2c2" stroke-width="1.200"/>
<text font-family="Liberation Sans,sans-serif" font-size="5.200" fill="#f4f4f4" transform="translate(656.500 478.500) rotate(180)" letter-spacing=".4">SPK16.000</text>
<path d="M591.700 512.800h14.600v5.200h-14.600zM591.700 523.900h14.600v5.200h-14.600zM591.700 545h14.600v5.200h-14.600z" fill="#c9c9c9"/>
<path d="M595.200 512.800h7.600v5.200h-7.600zM595.200 523.900h7.600v5.200h-7.600zM595.200 545h7.600v5.200h-7.600z" fill="#e2e2e2"/>
<rect x="452" y="523.900" width="14.100" height="5.100" fill="#bdbdbd"/><rect x="455.800" y="523.900" width="6" height="5.100" fill="#2fb34a"/><path d="M457.400 525l3 1.500l-3 1.500z" fill="#d8f5d8"/>
<rect x="471" y="525.200" width="52.200" height="24" rx="12" fill="none" stroke="#dfe8f0" stroke-width=".9" stroke-dasharray="1.200 .6"/>
<text font-family="Liberation Sans,sans-serif" font-size="20.500" fill="#f2f5f8" stroke="#306d9c" stroke-width=".9" transform="translate(517.300 530) rotate(180)" textLength="41.500" lengthAdjust="spacingAndGlyphs">UNO</text>
<circle cx="543.400" cy="537.800" r="10.300" fill="none" stroke="#ececec" stroke-width="4.800"/><circle cx="569.400" cy="537.800" r="10.300" fill="none" stroke="#ececec" stroke-width="4.800"/>
<path d="M539.800 537.800h7.200M543.400 534.200v7.200M566 537.800h6.800" stroke="#ececec" stroke-width="1.900" fill="none"/>
<path d="M553.600 531.500L559.200 544.100M559.200 531.500L553.600 544.100" stroke="#ececec" stroke-width="3.600" fill="none"/>
<rect x="671.900" y="372.300" width="50.300" height="40" rx="4" fill="#2b5573"/>
<rect x="722.200" y="373" width="11.700" height="6" rx="1" fill="#c9c9c9"/>
<rect x="722.200" y="377.800" width="11.700" height="40.800" rx="1.500" fill="#3d4042"/>
<rect x="722.200" y="377.800" width="11.700" height="7.500" rx="1.500" fill="#222425"/>
<rect x="671.900" y="380" width="50.300" height="36.700" rx="4" fill="#222425"/>
<path d="M671.900 386h38a10 10 0 0 1 10 10v12a9 9 0 0 1-9 8.700h-35a4 4 0 0 1-4-4z" fill="#3d4042"/>
<path d="M677.200 381.500v35" stroke="#6a6d6f" stroke-width=".7"/>
<rect x="683.300" y="426.100" width="15" height="29.500" rx="1" fill="#3d4042"/>
<path d="M675 430.800h8.300v4h-8.300zM675 439.100h8.300v4h-8.300zM675 447.400h8.300v4h-8.300z" fill="#dedede"/>
<rect x="698.300" y="433.900" width="7.300" height="14.400" rx="1" fill="#ececec"/>
<path d="M675.600 567h3.500v5.200h-3.500zM675.600 585.200h3.500v5.200h-3.500zM708.800 567h3.500v5.200h-3.500zM708.800 576.100h3.500v5.200h-3.500zM708.800 585.200h3.500v5.200h-3.500z" fill="#e6e6e6"/>
<rect x="678.900" y="562.600" width="30" height="30.600" rx="2.500" fill="#3d4042"/>
<rect x="678.900" y="564" width="30" height="29.200" rx="2.500" fill="#e2e2e2"/>
<circle cx="693.600" cy="578.400" r="7.600" fill="#b14a42"/>
<circle cx="707.200" cy="497.500" r="6.600" fill="#ececec"/><circle cx="707.200" cy="549.900" r="6.600" fill="#ececec"/>
<rect x="677.200" y="496.600" width="72.900" height="54" fill="#dddddd"/>
<path d="M679.900 515.600V532.200" stroke="#bdbdbd" stroke-width=".8"/>
<rect x="750" y="506" width="3.200" height="36" fill="#c4c4c4"/>
<path d="M754.600 495.900H841.100L848.300 503.100H852.300a1 1 0 0 1 1 1V510.900H866.700V515H872V510.900H885.900V514.100H901.300a9.750 9.750 0 0 1 0 19.500H885.900V537.200H872V532.200H866.700V537.200H853.300V544a1 1 0 0 1-1 1H848.300L841.100 552.400H754.600a1.500 1.500 0 0 1-1.500-1.500V497.400a1.500 1.500 0 0 1 1.500-1.500z" fill="#323433"/>
<path d="M779.2 495.400h3.400v2h-3.400zM779.2 550.900h3.400v2h-3.400zM787.1 495.400h3.400v2h-3.400zM787.1 550.900h3.400v2h-3.400zM795.0 495.400h3.400v2h-3.400zM795.0 550.900h3.400v2h-3.400zM802.9 495.400h3.400v2h-3.400zM802.9 550.900h3.400v2h-3.400zM810.8 495.400h3.400v2h-3.400zM810.8 550.900h3.400v2h-3.400zM818.7 495.400h3.400v2h-3.400zM818.7 550.900h3.400v2h-3.400z" fill="#f3f4f6"/>
<rect x="764.200" y="507.200" width="52.800" height="33.600" fill="#2a2c2b"/>
<path d="M771 524h38M776 524a4.500 4.500 0 1 1 .01 0M800 524l0-4h6M790 524l6 6h6" stroke="#272928" stroke-width="4" fill="none"/>
<ellipse cx="860" cy="524" rx="2.500" ry="10" fill="#272928"/><ellipse cx="878.500" cy="524" rx="2.500" ry="10" fill="#272928"/>
<path d="M895.300 521.300l5 1.700l-1 1.200l4.300 2.500l-5.400-1.500l1-1.300z" fill="#f2d21c" stroke="#f2d21c" stroke-width=".4"/>
</g>
<g id="wires" fill="none" stroke-linecap="round" stroke-linejoin="round" stroke-width="3.300">
<path d="M379.1 628.4V673.3" stroke="#343638"/>
<path d="M390.3 639.8V673.3" stroke="#e9231c"/>
<path d="M423.8 628.4V673.3" stroke="#343638"/>
<path d="M535.5 639.8V673.3" stroke="#e9231c"/>
<path d="M546.6 628.4V673.3" stroke="#343638"/>
<path d="M680.7 628.4V673.3" stroke="#343638"/>
<path d="M703.0 639.8V673.3" stroke="#e9231c"/>
<path d="M379.1 718.0V751.2" stroke="#343638"/>
<path d="M390.3 718.0V751.2" stroke="#e9231c"/>
<path d="M412.6 718.0V751.2" stroke="#d4238f"/>
<path d="M423.8 718.0V751.2" stroke="#343638"/>
<path d="M434.9 718.0V751.2" stroke="#863aa6"/>
<path d="M490.8 718.0V751.2" stroke="#f68b28"/>
<path d="M502.0 718.0V751.2" stroke="#f5db18"/>
<path d="M513.1 718.0V751.2" stroke="#27b04c"/>
<path d="M524.3 718.0V751.2" stroke="#79c6e4"/>
<path d="M546.6 718.0V751.2" stroke="#343638"/>
<path d="M691.8 695.6H410.4a9 9 0 0 0-9 9V751.2" stroke="#b57a52"/>
<path d="M535.5 706.9V751.2" stroke="#8a8a8a" stroke-width="1.300"/>
<path d="M535.5 712.600L541.0 717.500V741.500L535.5 746.300L530.0 741.500V717.500z" fill="#d6ae84" stroke="none"/>
<path d="M530.0 719h11v1.300h-11z" fill="#5b4a35" stroke="none"/>
<path d="M530.0 725.300h11v3.800h-11z" fill="#b5433a" stroke="none"/>
<path d="M530.0 731h11v3.600h-11zM530.0 737.200h11v3.600h-11z" fill="#f5821f" stroke="none"/>
<path d="M465.0 589.500V606.8a9.6 9.6 0 0 0 9.6 9.6H481.2a9.6 9.6 0 0 1 9.6 9.6V673.3" stroke="#f68b28" stroke-width="3"/>
<path d="M476.1 589.500V601.3a9.6 9.6 0 0 0 9.6 9.6H492.4a9.6 9.6 0 0 1 9.6 9.6V673.3" stroke="#f5db18" stroke-width="3"/>
<path d="M487.2 589.500V595.7a9.6 9.6 0 0 0 9.6 9.6H503.5a9.6 9.6 0 0 1 9.6 9.6V673.3" stroke="#27b04c" stroke-width="3"/>
<path d="M498.4 589.500V590.0a9.6 9.6 0 0 0 9.6 9.6H514.7a9.6 9.6 0 0 1 9.6 9.6V673.3" stroke="#79c6e4" stroke-width="3"/>
<path d="M582.8 590V554a9 9 0 0 0-9-9H421.6a9 9 0 0 0-9 9V673.3" stroke="#d4238f" stroke-width="3"/>
<path d="M571.7 590V562.2a9 9 0 0 0-9-9H443.9a9 9 0 0 0-9 9V673.3" stroke="#863aa6" stroke-width="3"/>
<path d="M553.9 378V368.3a10.5 10.5 0 0 1 10.5-10.5H659.0a10.5 10.5 0 0 1 10.5 10.5V640.600" stroke="#e9231c" stroke-width="2.800"/>
<path d="M542.8 378V361.8a10.5 10.5 0 0 1 10.5-10.5H692.5a10.5 10.5 0 0 1 10.5 10.5V628.700" stroke="#343638" stroke-width="2.800"/>
</g>
<g id="lcd">
<rect x="348.400" y="756.400" width="351.800" height="157.900" rx="3" fill="#4fa46c"/>
<circle cx="358.4" cy="765.9" r="5.600" fill="#f6f7f8"/>
<circle cx="358.4" cy="904.4" r="5.600" fill="#f6f7f8"/>
<circle cx="689.9" cy="904.4" r="5.600" fill="#f6f7f8"/>
<g font-family="Liberation Sans,sans-serif" font-size="4.600" fill="#d6efdd">
<circle cx="379.1" cy="762.300" r="2.500" fill="#55483a" stroke="#e2b88e" stroke-width="1.500"/>
<text transform="translate(377.5 767.300) rotate(90)">GND</text>
<circle cx="390.3" cy="762.300" r="2.500" fill="#55483a" stroke="#e2b88e" stroke-width="1.500"/>
<text transform="translate(388.7 767.300) rotate(90)">VCC</text>
<circle cx="401.4" cy="762.300" r="2.500" fill="#55483a" stroke="#e2b88e" stroke-width="1.500"/>
<text transform="translate(399.8 767.300) rotate(90)">V0</text>
<circle cx="412.6" cy="762.300" r="2.500" fill="#55483a" stroke="#e2b88e" stroke-width="1.500"/>
<text transform="translate(411.0 767.300) rotate(90)">RS</text>
<circle cx="423.8" cy="762.300" r="2.500" fill="#55483a" stroke="#e2b88e" stroke-width="1.500"/>
<text transform="translate(422.2 767.300) rotate(90)">RW</text>
<circle cx="434.9" cy="762.300" r="2.500" fill="#55483a" stroke="#e2b88e" stroke-width="1.500"/>
<text transform="translate(433.3 767.300) rotate(90)">E</text>
<circle cx="446.1" cy="762.300" r="2.500" fill="#55483a" stroke="#e2b88e" stroke-width="1.500"/>
<text transform="translate(444.5 767.300) rotate(90)">DB0</text>
<circle cx="457.3" cy="762.300" r="2.500" fill="#55483a" stroke="#e2b88e" stroke-width="1.500"/>
<text transform="translate(455.7 767.300) rotate(90)">DB1</text>
<circle cx="468.5" cy="762.300" r="2.500" fill="#55483a" stroke="#e2b88e" stroke-width="1.500"/>
<text transform="translate(466.9 767.300) rotate(90)">DB2</text>
<circle cx="479.6" cy="762.300" r="2.500" fill="#55483a" stroke="#e2b88e" stroke-width="1.500"/>
<text transform="translate(478.0 767.300) rotate(90)">DB3</text>
<circle cx="490.8" cy="762.300" r="2.500" fill="#55483a" stroke="#e2b88e" stroke-width="1.500"/>
<text transform="translate(489.2 767.300) rotate(90)">DB4</text>
<circle cx="502.0" cy="762.300" r="2.500" fill="#55483a" stroke="#e2b88e" stroke-width="1.500"/>
<text transform="translate(500.4 767.300) rotate(90)">DB5</text>
<circle cx="513.1" cy="762.300" r="2.500" fill="#55483a" stroke="#e2b88e" stroke-width="1.500"/>
<text transform="translate(511.5 767.300) rotate(90)">DB6</text>
<circle cx="524.3" cy="762.300" r="2.500" fill="#55483a" stroke="#e2b88e" stroke-width="1.500"/>
<text transform="translate(522.7 767.300) rotate(90)">DB7</text>
<circle cx="535.5" cy="762.300" r="2.500" fill="#55483a" stroke="#e2b88e" stroke-width="1.500"/>
<text transform="translate(533.9 767.300) rotate(90)">LED</text>
<circle cx="546.6" cy="762.300" r="2.500" fill="#55483a" stroke="#e2b88e" stroke-width="1.500"/>
<text transform="translate(545.0 767.300) rotate(90)">LED</text>
</g>
<rect x="368.100" y="780.300" width="312.700" height="112.600" rx="1" fill="#323433"/>
<rect x="379.200" y="800.500" width="290.300" height="69.800" rx="2.500" fill="#3b5ca6"/>
<path d="M400.40 809.400h13.800v22.700h-13.800zM400.40 836.100h13.800v24.300h-13.800zM416.03 809.400h13.800v22.700h-13.800zM416.03 836.100h13.800v24.300h-13.800zM431.66 809.400h13.800v22.700h-13.800zM431.66 836.100h13.800v24.300h-13.800zM447.29 809.400h13.800v22.700h-13.800zM447.29 836.100h13.800v24.300h-13.800zM462.92 809.400h13.800v22.700h-13.800zM462.92 836.100h13.800v24.300h-13.800zM478.55 809.400h13.800v22.700h-13.800zM478.55 836.100h13.800v24.300h-13.800zM494.18 809.400h13.800v22.700h-13.800zM494.18 836.100h13.800v24.300h-13.800zM509.81 809.400h13.800v22.700h-13.800zM509.81 836.100h13.800v24.300h-13.800zM525.44 809.400h13.800v22.700h-13.800zM525.44 836.100h13.800v24.300h-13.800zM541.07 809.400h13.800v22.700h-13.800zM541.07 836.100h13.800v24.300h-13.800zM556.70 809.400h13.800v22.700h-13.800zM556.70 836.100h13.800v24.300h-13.800zM572.33 809.400h13.800v22.700h-13.800zM572.33 836.100h13.800v24.300h-13.800zM587.96 809.400h13.800v22.700h-13.800zM587.96 836.100h13.800v24.300h-13.800zM603.59 809.400h13.800v22.700h-13.800zM603.59 836.100h13.800v24.300h-13.800zM619.22 809.400h13.800v22.700h-13.800zM619.22 836.100h13.800v24.300h-13.800zM634.85 809.400h13.800v22.700h-13.800zM634.85 836.100h13.800v24.300h-13.800z" fill="#36559d"/>
<defs><pattern id="dots" x="400.400" y="809.200" width="2.760" height="2.840" patternUnits="userSpaceOnUse"><path d="M0 0H2.760M0 0V2.840" stroke="#38589f" stroke-width=".75" fill="none"/></pattern></defs>
<g font-family="Liberation Mono,monospace" font-size="31.500" fill="#e6edf3" stroke="#e6edf3" stroke-width=".7">
<text transform="scale(.88 1)" x="462.84 480.60 498.36 516.12 533.89 551.65 569.41 587.17 604.93 622.69 640.45 658.22" y="831.400" text-anchor="middle">Hello world!</text>
</g>
<rect x="398" y="806" width="255" height="30" fill="url(#dots)"/>
</g>
<g id="pot">
<path d="M680.7 706.9V722" stroke="#7d7d80" stroke-width="1.400"/>
<circle cx="680.7" cy="706.9" r="1.700" fill="#8a8a8d"/>
<path d="M691.8 706.9V722" stroke="#7d7d80" stroke-width="1.400"/>
<circle cx="691.8" cy="706.9" r="1.700" fill="#8a8a8d"/>
<path d="M703.0 706.9V722" stroke="#7d7d80" stroke-width="1.400"/>
<circle cx="703.0" cy="706.9" r="1.700" fill="#8a8a8d"/>
<circle cx="691.800" cy="740" r="26.400" fill="#2c5166"/>
<circle cx="691.800" cy="740" r="24" fill="none" stroke="#4d7a98" stroke-width="1.200" stroke-dasharray=".8 18"/>
<circle cx="691.800" cy="740" r="21.300" fill="#1f2224"/>
<circle cx="691.800" cy="740" r="19.300" fill="none" stroke="#3a4a52" stroke-width="3.600" stroke-dasharray=".7 1.100"/>
<defs><pattern id="pd" x="0" y="0" width="2.600" height="2.600" patternUnits="userSpaceOnUse" patternTransform="rotate(30)"><circle cx="1.300" cy="1.300" r=".45" fill="#5bb8e8"/></pattern></defs>
<circle cx="691.800" cy="740" r="17.500" fill="#6e9ac6"/>
<circle cx="691.800" cy="740" r="16.500" fill="url(#pd)"/>
<path d="M687.800 737L675.400 730" stroke="#222527" stroke-width="3.800" stroke-linecap="butt"/>
</g>
<!--/CIRCUIT-->
<!--ICONS3-->
</svg>
</body>
</html>
